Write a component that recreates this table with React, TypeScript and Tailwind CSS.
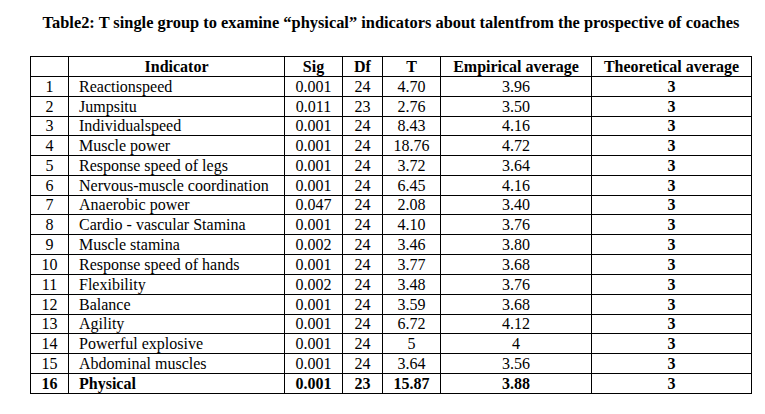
import React from "react";

const rows: [string, string, string, string, string, string][] = [
  ["1", "Reactionspeed", "0.001", "24", "4.70", "3.96"],
  ["2", "Jumpsitu", "0.011", "23", "2.76", "3.50"],
  ["3", "Individualspeed", "0.001", "24", "8.43", "4.16"],
  ["4", "Muscle power", "0.001", "24", "18.76", "4.72"],
  ["5", "Response speed of legs", "0.001", "24", "3.72", "3.64"],
  ["6", "Nervous-muscle coordination", "0.001", "24", "6.45", "4.16"],
  ["7", "Anaerobic power", "0.047", "24", "2.08", "3.40"],
  ["8", "Cardio - vascular Stamina", "0.001", "24", "4.10", "3.76"],
  ["9", "Muscle stamina", "0.002", "24", "3.46", "3.80"],
  ["10", "Response speed of hands", "0.001", "24", "3.77", "3.68"],
  ["11", "Flexibility", "0.002", "24", "3.48", "3.76"],
  ["12", "Balance", "0.001", "24", "3.59", "3.68"],
  ["13", "Agility", "0.001", "24", "6.72", "4.12"],
  ["14", "Powerful explosive", "0.001", "24", "5", "4"],
  ["15", "Abdominal muscles", "0.001", "24", "3.64", "3.56"],
  ["16", "Physical", "0.001", "23", "15.87", "3.88"],
];

// heights per data row (incl. bottom border)
const heights = [20, 20, 19, 20, 20, 20, 19, 20, 20, 20, 20, 20, 19, 20, 20, 20];

export default function App() {
  const cell = "flex items-center justify-center border-r border-b border-black";
  return (
    <div
      className="w-[765px] h-[414px] bg-white text-black"
      style={{ fontFamily: '"Liberation Serif", "Times New Roman", serif' }}
    >
      <div className="pt-[13px] pl-[30px] w-[752px]">
        <div className="text-center font-bold text-[16.4px] leading-[20px] h-[43px] whitespace-nowrap">
          Table2: T single group to examine “physical” indicators about talentfrom the prospective of coaches
        </div>
        <div className="grid grid-cols-[38px_216px_58px_40px_58px_151px_160px] border-l border-t border-black text-[16px] leading-none">
          <div className={`${cell} h-[20px]`}></div>
          <div className={`${cell} h-[20px] font-bold`}>Indicator</div>
          <div className={`${cell} h-[20px] font-bold`}>Sig</div>
          <div className={`${cell} h-[20px] font-bold`}>Df</div>
          <div className={`${cell} h-[20px] font-bold`}>T</div>
          <div className={`${cell} h-[20px] font-bold`}>Empirical average</div>
          <div className={`${cell} h-[20px] font-bold`}>Theoretical average</div>
          {rows.map((r, i) => {
            const h = heights[i] === 19 ? "h-[19px]" : "h-[20px]";
            const b = i === rows.length - 1 ? "font-bold" : "";
            return (
              <React.Fragment key={r[0]}>
                <div className={`${cell} ${h} ${b}`}>{r[0]}</div>
                <div className={`flex items-center border-r border-b border-black pl-[10px] ${h} ${b}`}>{r[1]}</div>
                <div className={`${cell} ${h} ${b}`}>{r[2]}</div>
                <div className={`${cell} ${h} ${b}`}>{r[3]}</div>
                <div className={`${cell} ${h} ${b}`}>{r[4]}</div>
                <div className={`${cell} ${h} ${b}`}>{r[5]}</div>
                <div className={`${cell} ${h} font-bold`}>3</div>
              </React.Fragment>
            );
          })}
        </div>
      </div>
    </div>
  );
}
